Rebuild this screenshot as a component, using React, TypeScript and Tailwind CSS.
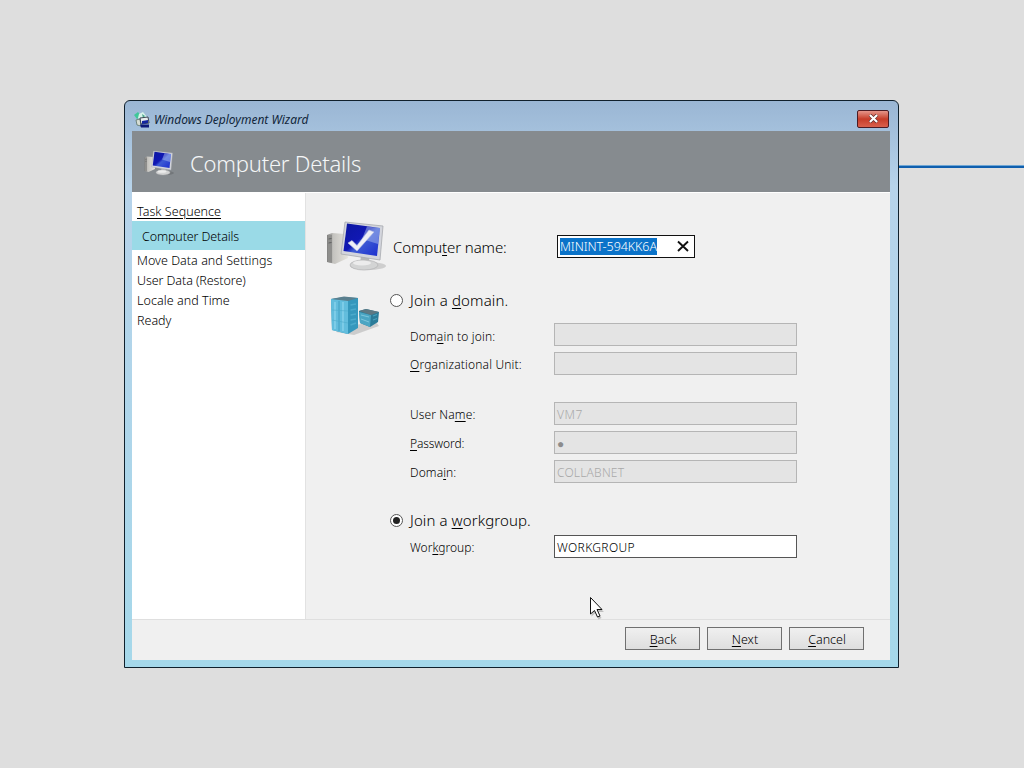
import type { ReactNode } from "react";

type FieldRowProps = {
  label: ReactNode;
  labelClass?: string;
  value?: string;
  disabled?: boolean;
  valueClass?: string;
};

const steps = [
  { title: "Move Data and Settings", className: "tracking-[0.03px]" },
  { title: "User Data (Restore)", className: "tracking-[-0.08px]" },
  { title: "Locale and Time", className: "tracking-[0.05px]" },
  { title: "Ready", className: "" },
];

function Key({ children }: { children: ReactNode }) {
  return <span className="underline decoration-1 underline-offset-[1.500px]">{children}</span>;
}

function ComputerIcon({ className, checked }: { className: string; checked?: boolean }) {
  return (
    <svg viewBox="0 0 60 52" className={className}>
      <defs>
        <linearGradient id="screen" x1="0" y1="0" x2="1" y2="1">
          <stop offset="0" stopColor="#0c16a0" />
          <stop offset="0.45" stopColor="#1018b4" />
          <stop offset="0.55" stopColor="#3d5bd4" />
          <stop offset="1" stopColor="#1a2ccf" />
        </linearGradient>
        <linearGradient id="case" x1="0" y1="0" x2="1" y2="0">
          <stop offset="0" stopColor="#7f7f7e" />
          <stop offset="0.3" stopColor="#c4c3bf" />
          <stop offset="1" stopColor="#e6e4de" />
        </linearGradient>
      </defs>
      <ellipse cx="42" cy="46" rx="18" ry="4" fill="#000" opacity="0.14" />
      <path d="M1 15 L6 13 L19 14 L22 38 L9 44 L1 42 Z" fill="url(#case)" />
      <path d="M2 16 L6 14.500 V43 L2 42 Z" fill="#8e8e8c" />
      <path d="M2.500 19 L5.500 18.500 M2.500 23 L5.500 22.500" stroke="#5f6060" strokeWidth="1" />
      <path d="M35 36 L43 38 L44 44 L34 43 Z" fill="#b7b8b8" />
      <ellipse cx="38" cy="45" rx="14" ry="5" fill="#d3d4d4" stroke="#b1b2b3" strokeWidth="0.7" />
      <ellipse cx="36" cy="43" rx="9" ry="2.500" fill="#ececec" />
      <path d="M19 2 L57 6 L54 40 L15 34 Z" fill="#d3d5dc" stroke="#a7a9ae" strokeWidth="0.8" />
      <path d="M21 3.500 L54 8 L51 36 L17.500 31 Z" fill="url(#screen)" />
      <path d="M41 6.500 L54 8 L52 24 L36 19 Z" fill="#a9bdf0" opacity="0.5" />
      {checked && (
        <path d="M22 23 L26 20.500 L31 25.500 L43 10 L48 12 L31 31 Z" fill="#eeeff6" stroke="#b8c0e4" strokeWidth="0.6" />
      )}
    </svg>
  );
}

function ServerIcon() {
  return (
    <svg viewBox="0 0 50 40" className="h-10 w-[50px]">
      <path d="M6 37 L24 40 L49 31 L46 27 L10 32 Z" fill="#000" opacity="0.15" />
      <path d="M1 4 L14 2 L28 3 L28 33 L18 39 L2 35 Z" fill="#3598bd" />
      <path d="M1 4 L18 5 L18 39 L2 35 Z" fill="#62bddd" />
      <path d="M1 4 L14 1.500 L28 3 L18 6 Z" fill="#5a7f8e" />
      <path d="M5 7 V34 M13 7 V36" stroke="#84d0ea" strokeWidth="1.6" />
      <path d="M9 6 V36" stroke="#3c9cc0" strokeWidth="0.9" />
      <path d="M2 15 L18 16 M2 25 L18 28" stroke="#4dabcb" strokeWidth="0.6" />
      <path d="M20.500 10 L26 9 M20.500 15 L26 14 M20.500 20 L26 19 M20.500 25 L26 24 M20.500 30 L26 28" stroke="#4baacb" strokeWidth="1.6" />
      <path d="M29 16 L36 14 L49 17 L48 27 L40 32 L30 28 Z" fill="#2b7c99" />
      <path d="M29 17 L41 20 L40 32 L30 28 Z" fill="#4aa5c3" />
      <path d="M29 16 L36 14 L49 17 L41 20 Z" fill="#5d7883" />
      <path d="M31 20 L39 22 M31 24 L39 27" stroke="#7cc6dc" strokeWidth="1" />
      <path d="M43 21 L47 19.500 M43 25 L47 23.500" stroke="#4aa3bf" strokeWidth="1.2" />
    </svg>
  );
}

function WizardIcon() {
  return (
    <svg viewBox="0 0 16 16" className="h-4 w-4">
      <path d="M0 3 L4 0 L7 4 L3 7 Z" fill="#3fc79a" />
      <path d="M5 2 L9 0 L13 5 L8 8 L4 6 Z" fill="#d7f2ea" />
      <path d="M8 2 L11 4 L9 6 Z" fill="#4ca58c" />
      <path d="M2 8 L6 7 L7 14 L3 13 Z" fill="#d6ddd4" stroke="#5c7268" strokeWidth="0.8" />
      <path d="M6 6 L14 5 L15 11 L7 12 Z" fill="#e9edf0" stroke="#2c3644" strokeWidth="0.9" />
      <path d="M8 9 L14 8 V11 L8 12 Z" fill="#1426a0" />
      <path d="M6 12.500 H15 V15.500 H7 Z" fill="#0e1a78" />
    </svg>
  );
}

function Radio({ checked }: { checked?: boolean }) {
  return (
    <span className="flex size-[13px] shrink-0 items-center justify-center rounded-full border border-[#555] bg-white">
      {checked && <span className="size-[7px] rounded-full bg-[#222]" />}
    </span>
  );
}

function FieldRow({ label, labelClass = "", value, disabled, valueClass = "" }: FieldRowProps) {
  return (
    <div className="flex h-[23px] items-center">
      <span className={`w-36 shrink-0 pt-[3px] text-[12px] leading-4 whitespace-nowrap ${labelClass}`}>{label}</span>
      <span
        className={`flex h-[23px] w-[243px] items-center border pl-0.5 text-[12px] leading-4 ${
          disabled ? "border-[#b5b5b5] bg-[#e4e4e4] text-[#a9a9a9]" : "border-[#555] bg-white text-black"
        }`}
      >
        <span className={`pt-0.5 ${valueClass}`}>{value}</span>
      </span>
    </div>
  );
}

function WizardButton({ children }: { children: ReactNode }) {
  return (
    <button className="flex h-[23px] w-[75px] items-center justify-center border border-[#707070] bg-linear-to-b from-[#f0f0f0] to-[#dedede] pt-0.5 pl-px text-[12.500px] leading-4">
      <span>{children}</span>
    </button>
  );
}

function Sidebar() {
  return (
    <nav className="w-[174px] shrink-0 border-r border-[#e2e2e2] bg-white text-[12.500px] leading-5 whitespace-nowrap">
      <div className="h-7 pt-[9px] pl-[5px]">
        <span className="tracking-[0.04px] underline decoration-1 underline-offset-[1.500px]">Task Sequence</span>
      </div>
      <div className="flex h-[29px] items-center bg-[#9adae7] pt-[3px] pl-2.5">
        <span className="tracking-[-0.12px]">Computer Details</span>
      </div>
      <div className="pt-px pl-[5px]">
        {steps.map((step) => (
          <div key={step.title} className="h-5">
            <span className={step.className}>{step.title}</span>
          </div>
        ))}
      </div>
    </nav>
  );
}

function DetailsForm() {
  return (
    <main className="flex-1 pt-[27px] pl-5 whitespace-nowrap">
      <div className="flex h-[52px] items-center">
        <ComputerIcon className="h-[52px] w-[60px]" checked />
        <span className="ml-[7px] w-[164px] pt-0.5 text-[15px] tracking-[-0.1px]">
          Compu<Key>t</Key>er name:
        </span>
        <div className="flex h-[23px] w-[138px] items-center border border-[#111] bg-white pl-0.5">
          <span className="flex h-[17px] items-center bg-[#0b73c9] pt-0.5 text-[12.500px] leading-4 tracking-[-0.07px] text-white">
            MININT-594KK6A
          </span>
          <svg viewBox="0 0 12 12" className="mr-[5px] ml-auto size-3">
            <path d="M1 1.500 L11 11 M11 1.500 L1 11" stroke="#111" strokeWidth="1.9" />
          </svg>
        </div>
      </div>

      <div className="flex pt-4">
        <div className="w-16 shrink-0 pt-[7px] pl-1">
          <ServerIcon />
        </div>
        <div>
          <div className="flex h-6 items-center gap-[7px]">
            <Radio />
            <span className="text-[15px] leading-5 tracking-[0.15px]">
              Join a <Key>d</Key>omain.
            </span>
          </div>
          <div className="flex flex-col gap-1.5 pt-[11px] pl-5">
            <FieldRow label={<>Dom<Key>a</Key>in to join:</>} labelClass="relative top-px tracking-[0.17px]" disabled />
            <FieldRow label={<><Key>O</Key>rganizational Unit:</>} labelClass="tracking-[0.17px]" disabled />
          </div>
          <div className="flex flex-col gap-1.5 pt-[27px] pl-5">
            <FieldRow
              label={<>User Na<Key>m</Key>e:</>}
              labelClass="tracking-[0.12px]"
              value="VM7"
              valueClass="tracking-[0.5px]"
              disabled
            />
            <FieldRow
              label={<><Key>P</Key>assword:</>}
              labelClass="tracking-[-0.1px]"
              value="●"
              valueClass="pt-[3px] text-[12px] text-[#8c8c8c]"
              disabled
            />
            <FieldRow
              label={<>Doma<Key>i</Key>n:</>}
              labelClass="tracking-[0.1px]"
              value="COLLABNET"
              valueClass="tracking-[0.2px]"
              disabled
            />
          </div>
          <div className="flex h-[52px] items-end">
            <div className="flex h-[30px] items-center gap-[7px]">
              <Radio checked />
              <span className="text-[15px] leading-5 tracking-[0.1px]">
                Join a <Key>w</Key>orkgroup.
              </span>
            </div>
          </div>
          <div className="pl-5">
            <FieldRow label={<>Wor<Key>k</Key>group:</>} value="WORKGROUP" valueClass="tracking-[0.35px]" />
          </div>
        </div>
      </div>
    </main>
  );
}

export default function App() {
  return (
    <div className="relative h-screen w-screen overflow-hidden bg-[#dedede] pt-[100px] pl-[124px] font-['Noto_Sans','Open_Sans',sans-serif] font-light text-black">
      <div className="absolute top-[165px] left-[899px] h-[3px] w-[125px] border-t border-[#6fa6d4] bg-[#0f5fae]" />

      <div className="relative flex h-[568px] w-[775px] flex-col rounded-t-md border border-[#10202c] bg-linear-to-b from-[#9ab6d4] via-[#b7d3ea] via-15% to-[#a5d8ea] pr-2 pb-[7px] pl-[7px]">
        <header className="flex h-[30px] shrink-0 items-center pt-[7px] pl-0.5">
          <WizardIcon />
          <span className="ml-1 text-[12px] leading-4 font-normal text-[#12263a] italic">Windows Deployment Wizard</span>
          <button className="mr-px mb-0.5 ml-auto flex h-[18px] w-8 items-center justify-center rounded-xs border border-[#4b1c24] bg-linear-to-b from-[#e5958a] via-[#c63c28] via-50% to-[#d9604c]">
            <svg viewBox="0 0 12 10" className="h-[9px] w-[11px]">
              <path d="M2 1 L10 9 M10 1 L2 9" stroke="#5a2a2a" strokeWidth="3.8" />
              <path d="M2 1 L10 9 M10 1 L2 9" stroke="#fff" strokeWidth="2.4" />
            </svg>
          </button>
        </header>

        <div className="flex h-[61px] shrink-0 items-center bg-[#868b8f] pl-3">
          <ComputerIcon className="mt-0.5 h-[26px] w-[30px]" />
          <h1 className="ml-4 pt-[3px] text-[22px] leading-8 font-light tracking-[-0.2px] text-[#f4f6f7]">
            Computer Details
          </h1>
        </div>

        <section className="flex min-h-0 flex-1 flex-col border-t border-white bg-[#f0f0f0]">
          <div className="flex h-[427px] shrink-0 border-b border-[#dfdfdf]">
            <Sidebar />
            <DetailsForm />
          </div>
          <footer className="flex flex-1 items-start justify-end gap-[7px] pt-[7px] pr-[26px]">
            <WizardButton>
              <Key>B</Key>ack
            </WizardButton>
            <WizardButton>
              <Key>N</Key>ext
            </WizardButton>
            <WizardButton>
              <Key>C</Key>ancel
            </WizardButton>
          </footer>
        </section>
      </div>

      <svg viewBox="0 0 16 24" className="absolute top-[596px] left-[589px] h-6 w-4">
        <path d="M2.500 3.500 V20.500 L6.500 17 L9.500 23.500 L12.500 22 L9.500 16 H15 Z" fill="#000" opacity="0.2" />
        <path d="M1.500 1.500 V18 L5.500 14.500 L8.500 21 L11 20 L8 13.500 H13 Z" fill="#fff" stroke="#111" strokeWidth="1" />
      </svg>
    </div>
  );
}
